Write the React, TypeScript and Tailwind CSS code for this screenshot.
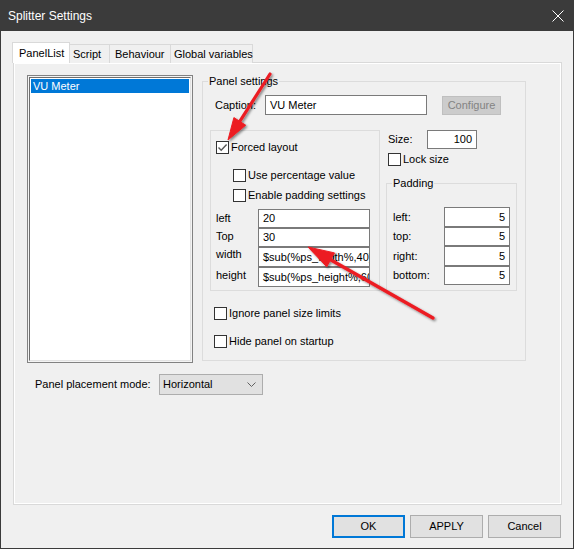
import React from 'react';

const Check = ({ checked, label, className = '' }: { checked?: boolean; label: string; className?: string }) => (
  <div className={`flex items-center ${className}`}>
    <div className="w-[13px] h-[13px] border border-[#333333] bg-white flex items-center justify-center shrink-0">
      {checked && (
        <svg width="11" height="11" viewBox="0 0 11 11">
          <polyline points="1.5,5.5 4.2,8.2 9.6,2.6" fill="none" stroke="#555555" strokeWidth="1.4" />
        </svg>
      )}
    </div>
    <span className="ml-[2px] leading-[13px]">{label}</span>
  </div>
);

const Box = ({ value, className = '', right }: { value: string; className?: string; right?: boolean }) => (
  <div
    className={`bg-white border border-[#7a7a7a] flex items-center overflow-hidden whitespace-nowrap px-[4px] ${right ? 'justify-end' : ''} ${className}`}
  >
    {value}
  </div>
);

export default function App() {
  return (
    <div className="relative w-[574px] h-[549px] bg-[#f0f0f0] border-x border-b border-[#3b3b3b] flex flex-col text-[11px] text-black font-['Liberation_Sans',Arial,sans-serif] overflow-hidden select-none">
      {/* title bar */}
      <div className="h-[31px] shrink-0 bg-[#3b3b3b] flex items-center justify-between pl-[7px] pr-[9px] text-white text-[12px]">
        <span>Splitter Settings</span>
        <svg width="12" height="12" viewBox="0 0 12 12">
          <path d="M0.5 0.5 L11.5 11.5 M11.5 0.5 L0.5 11.5" stroke="#ffffff" strokeWidth="1" />
        </svg>
      </div>

      {/* tabs */}
      <div className="mt-[11px] ml-[11px] h-[21px] flex items-end relative z-10 whitespace-nowrap">
        <div className="h-[21px] w-[58px] bg-white border border-b-0 border-[#d9d9d9] pl-[6px] flex items-center">PanelList</div>
        <div className="h-[19px] w-[40px] bg-[#f0f0f0] border-t border-r border-[#d9d9d9] pl-[3px] flex items-center">Script</div>
        <div className="h-[19px] w-[61px] bg-[#f0f0f0] border-t border-r border-[#d9d9d9] pl-[5px] flex items-center">Behaviour</div>
        <div className="h-[19px] w-[82px] bg-[#f0f0f0] border-t border-r border-[#d9d9d9] pl-[3px] flex items-center">Global variables</div>
      </div>

      {/* tab page */}
      <div className="-mt-px ml-[12px] w-[549px] h-[443px] shrink-0 border border-[#d9d9d9] shadow-[inset_1px_1px_0_#ffffff,inset_-1px_-1px_0_#ffffff] pt-[12px] pl-[13px]">
        <div className="flex items-start">
          {/* list box */}
          <div className="w-[166px] h-[288px] border border-[#828282] p-px bg-[#f4f4f4]">
            <div className="w-full h-full bg-white border-t border-l border-[#6e6e6e] border-r border-b border-r-[#e3e3e3] border-b-[#e3e3e3] pt-px px-px">
              <div className="h-[14px] bg-[#0078d7] text-white pl-[2px] flex items-center">VU Meter</div>
            </div>
          </div>

          {/* panel settings */}
          <fieldset className="ml-[9px] w-[324px] h-[286px] border border-[#dcdcdc]">
            <legend className="ml-[5px] px-[1px] leading-[13px]">Panel settings</legend>

            <div className="mt-[7px] pl-[12px] flex items-center">
              <span className="w-[50px]">Caption:</span>
              <Box value="VU Meter" className="w-[162px] h-[20px]" />
              <div className="ml-[15px] w-[59px] h-[19px] bg-[#cccccc] border border-[#bfbfbf] text-[#838383] flex items-center justify-center">
                Configure
              </div>
            </div>

            <div className="mt-[15px] pl-[7px] flex items-start">
              {/* forced layout group */}
              <div className="w-[170px] h-[161px] border border-[#dcdcdc] pt-[10px] pl-[5px]">
                <Check checked label="Forced layout" />
                <Check label="Use percentage value" className="mt-[15px] ml-[17px]" />
                <Check label="Enable padding settings" className="mt-[7px] ml-[17px]" />
                <div className="mt-[7px] grid grid-cols-[42px_112px]">
                  <span className="leading-[14px] pt-[2px]">left</span>
                  <Box value="20" className="h-[19px]" />
                  <span className="leading-[14px] pt-[1px]">Top</span>
                  <Box value="30" className="h-[19px]" />
                  <span className="leading-[14px]">width</span>
                  <Box value="$sub(%ps_width%,40)" className="h-[20px]" />
                  <span className="leading-[14px] pt-[1px]">height</span>
                  <Box value="$sub(%ps_height%,60)" className="h-[20px]" />
                </div>
              </div>

              {/* size + padding */}
              <div className="ml-[6px] flex flex-col">
                <div className="h-[19px] flex items-center">
                  <span className="pl-[2px] w-[41px]">Size:</span>
                  <Box value="100" right className="w-[50px] h-[19px]" />
                </div>
                <Check label="Lock size" className="mt-[4px] ml-[2px]" />
                <fieldset className="mt-[11px] w-[131px] h-[114px] border border-[#dcdcdc]">
                  <legend className="ml-[5px] px-[1px] leading-[13px]">Padding</legend>
                  <div className="mt-[17px] pl-[6px] grid grid-cols-[51px_66px] items-center">
                    <span>left:</span>
                    <Box value="5" right className="h-[20px]" />
                    <span>top:</span>
                    <Box value="5" right className="h-[19px]" />
                    <span>right:</span>
                    <Box value="5" right className="h-[20px]" />
                    <span>bottom:</span>
                    <Box value="5" right className="h-[19px]" />
                  </div>
                </fieldset>
              </div>
            </div>

            <Check label="Ignore panel size limits" className="mt-[16px] ml-[11px]" />
            <Check label="Hide panel on startup" className="mt-[15px] ml-[11px]" />
          </fieldset>
        </div>

        {/* placement mode */}
        <div className="mt-[11px] flex items-center">
          <span className="ml-[8px] w-[124px]">Panel placement mode:</span>
          <div className="w-[104px] h-[21px] bg-[#e1e1e1] border border-[#adadad] flex items-center justify-between pl-[3px] pr-[6px]">
            <span>Horizontal</span>
            <svg width="9" height="5" viewBox="0 0 9 5">
              <polyline points="0.5,0.5 4.5,4.5 8.5,0.5" fill="none" stroke="#606060" strokeWidth="1" />
            </svg>
          </div>
        </div>
      </div>

      {/* buttons */}
      <div className="mt-[10px] pr-[12px] flex justify-end gap-[5px]">
        <div className="w-[73px] h-[23px] bg-[#e1e1e1] border-2 border-[#0078d7] flex items-center justify-center">OK</div>
        <div className="w-[73px] h-[23px] bg-[#e1e1e1] border border-[#adadad] flex items-center justify-center">APPLY</div>
        <div className="w-[73px] h-[23px] bg-[#e1e1e1] border border-[#adadad] flex items-center justify-center">Cancel</div>
      </div>

      {/* red annotation arrows */}
      <svg className="absolute -left-px top-0 pointer-events-none" width="574" height="549" viewBox="0 0 574 549">
        <defs>
          <filter id="sh" x="-20%" y="-20%" width="140%" height="140%">
            <feDropShadow dx="1.5" dy="1.5" stdDeviation="1" floodColor="#000000" floodOpacity="0.45" />
          </filter>
        </defs>
        <g filter="url(#sh)" fill="#ec1c24" stroke="#ec1c24">
          <line x1="270" y1="74" x2="239.8" y2="121.4" strokeWidth="3.2" strokeLinecap="round" />
          <polygon points="228,140 245.7,125.2 233.9,117.6" strokeWidth="1" strokeLinejoin="round" />
          <line x1="433" y1="318" x2="330.6" y2="259.8" strokeWidth="3.4" strokeLinecap="round" />
          <polygon points="308,247 334.5,252.9 326.7,266.8" strokeWidth="1" strokeLinejoin="round" />
        </g>
      </svg>
    </div>
  );
}
